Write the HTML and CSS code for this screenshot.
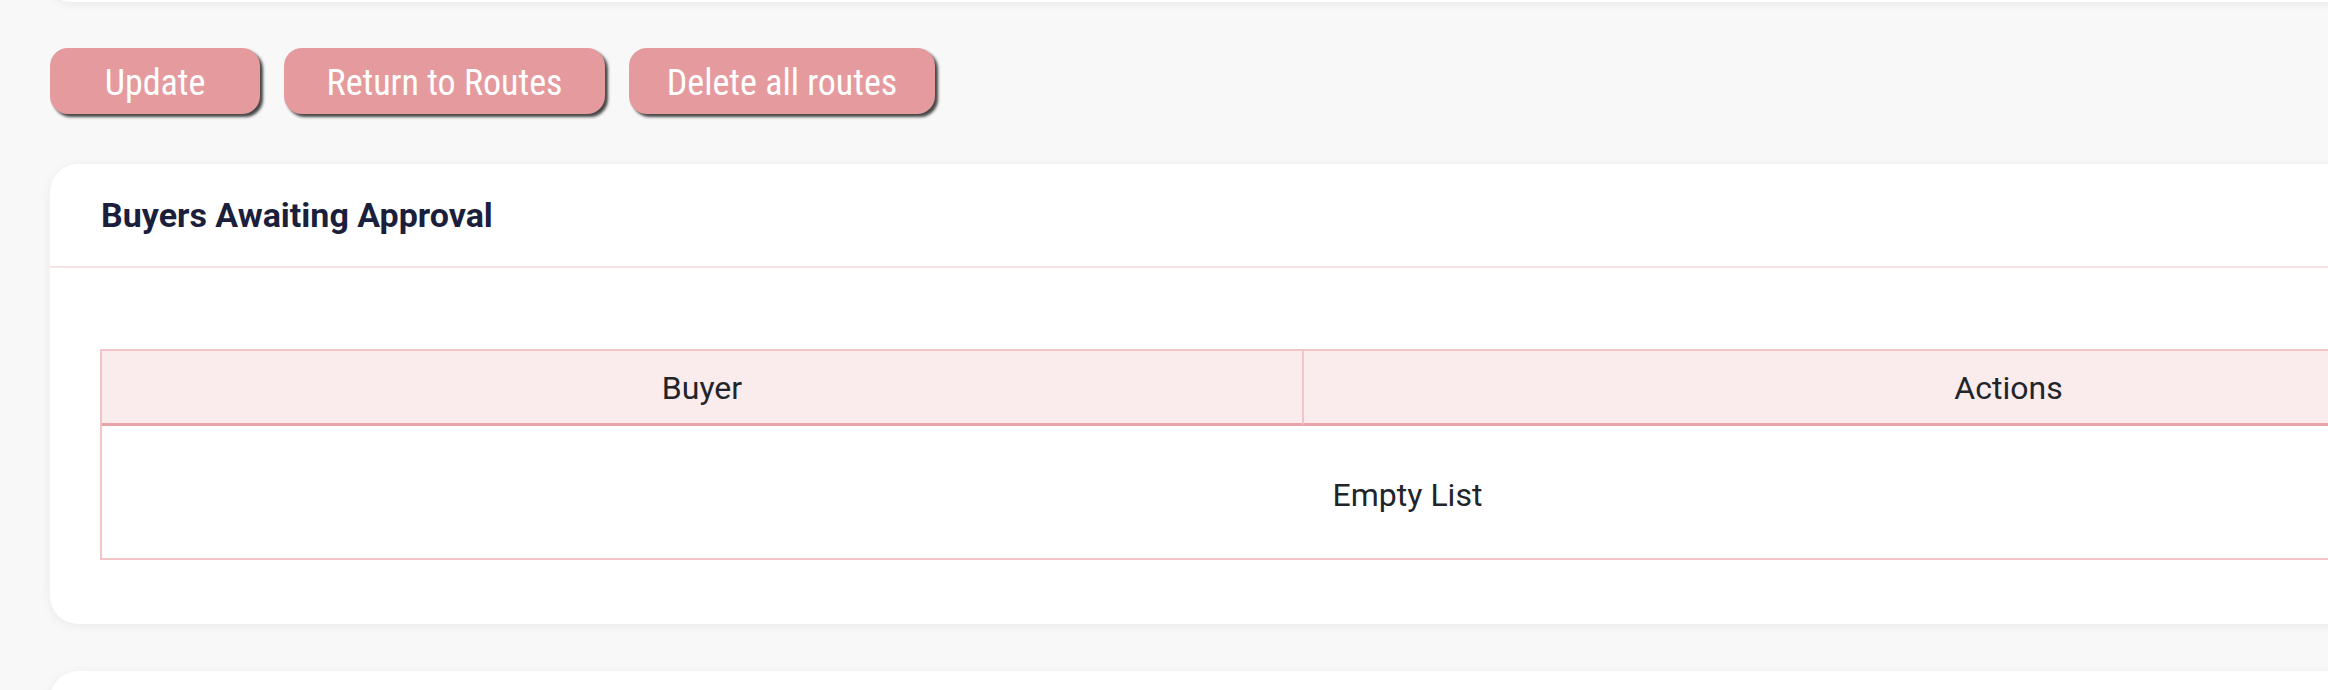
FILE: index.html
```html
<!DOCTYPE html>
<html lang="en">
<head>
<meta charset="utf-8">
<title>Buyers Awaiting Approval</title>
<link rel="stylesheet" href="styles.css">
</head>
<body>
<div class="page">
  <div class="top-card"></div>
  <div class="actions">
    <button class="btn btn-update">Update</button>
    <button class="btn btn-return">Return to Routes</button>
    <button class="btn btn-delete">Delete all routes</button>
  </div>
  <section class="card">
    <header class="card-header">
      <h2 class="card-title">Buyers Awaiting Approval</h2>
    </header>
    <div class="card-body">
      <table class="list-table">
        <colgroup>
          <col class="col-buyer">
          <col class="col-actions">
        </colgroup>
        <thead>
          <tr><th>Buyer</th><th>Actions</th></tr>
        </thead>
        <tbody>
          <tr><td colspan="2">Empty List</td></tr>
        </tbody>
      </table>
    </div>
  </section>
  <section class="card card-next"></section>
</div>
</body>
</html>
```
FILE: styles.css
```css
html, body {
  margin: 0;
  padding: 0;
  overflow: hidden;
  background: #f8f8f8;
}
body {
  font-family: "Roboto", "Open Sans", sans-serif;
  color: #212529;
}
.page {
  width: 2715px;
  padding: 0 50px;
}
.top-card {
  height: 40px;
  margin-top: -38px;
  background: #fff;
  border-radius: 28px;
  box-shadow: 0 2px 10px rgba(0,0,0,0.06);
}
.actions {
  display: flex;
  gap: 24px;
  margin-top: 46px;
}
.btn {
  height: 66px;
  padding: 4px 0 0;
  border: 0;
  border-radius: 18px;
  background: #e59a9e;
  color: #fff;
  font-family: inherit;
  font-size: 36px;
  font-stretch: 85%;
  box-shadow: 3px 3px 3px rgba(0,0,0,0.72);
}
.btn-update { width: 210px; }
.btn-return { width: 321px; }
.btn-delete { width: 306px; }
.card {
  margin-top: 50px;
  background: #fff;
  border-radius: 28px;
  box-shadow: 0 2px 12px rgba(0,0,0,0.06);
}
.card-header {
  height: 102px;
  padding: 0 51px;
  display: flex;
  align-items: center;
  border-bottom: 2px solid #fae3e5;
}
.card-title {
  margin: 0;
  font-size: 34px;
  font-weight: 700;
  color: #1c1f3c;
}
.card-body {
  padding: 81px 50px 64px;
}
.list-table {
  width: 2615px;
  table-layout: fixed;
  border-spacing: 0;
  border: 2px solid #f2c4c8;
  font-size: 32px;
}
.col-buyer { width: 1200px; }
.list-table th {
  box-sizing: border-box;
  height: 75px;
  padding: 2px 0 0;
  background: #faebec;
  border-bottom: 3px solid #e9a3a8;
  font-weight: 400;
}
.list-table th + th {
  border-left: 2px solid #f2c4c8;
}
.list-table td {
  box-sizing: border-box;
  height: 132px;
  padding: 5px 0 0;
  text-align: center;
}
.card-next {
  margin-top: 47px;
  height: 100px;
}
```
